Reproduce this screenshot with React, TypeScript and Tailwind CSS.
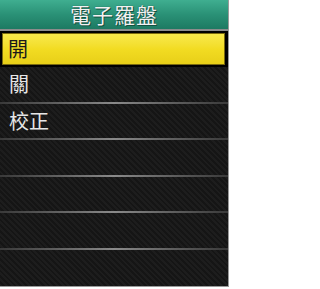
import React from 'react';

const items = ['開', '關', '校正', '', '', '', ''];

const App: React.FC = () => {
  return (
    <div className="w-[231px] h-[289px] bg-white" style={{ fontFamily: '"Noto Sans CJK TC", "Noto Sans", sans-serif' }}>
      <div className="w-[229px] h-[287px] border-r border-b border-[#9a9a9a] flex flex-col bg-[#1a1a1a] bg-[repeating-linear-gradient(45deg,#1d1d1d_0px,#1d1d1d_2px,#151515_2px,#151515_4px)] overflow-hidden">
        {/* header */}
        <div className="h-[31px] shrink-0 border-b-2 border-[#8c8c8c] bg-gradient-to-b from-[#3fae90] via-[#2a9176] to-[#1d7a62] flex items-center justify-center">
          <span className="text-[21px] leading-none text-[#f2f2f2] tracking-[1px] [text-shadow:0_0_1px_#0d3d30,1px_1px_0_#145443]">
            電子羅盤
          </span>
        </div>

        {/* menu rows */}
        <div className="flex-1 flex flex-col">
          {items.map((label, i) =>
            i === 0 ? (
              <div key={i} className="h-[36px] shrink-0 bg-black p-[2px] pr-[3px]">
                <div className="h-full bg-gradient-to-b from-[#f8e94a] via-[#f2dc22] to-[#e8cf18] border border-[#7a6a10] flex items-center pl-[5px]">
                  <span className="text-[20px] leading-none text-[#1a1a1a]">{label}</span>
                </div>
              </div>
            ) : (
              <div key={i} className="h-[36.6px] shrink-0 flex flex-col">
                <div className="flex-1 flex items-center pl-[9px]">
                  <span className="text-[20px] leading-none text-[#e6e6e6]">{label}</span>
                </div>
                {i < items.length - 1 && (
                  <div className="h-[2px] shrink-0 bg-gradient-to-r from-[#3a3a3a] via-[#8a8a8a] to-[#3a3a3a]" />
                )}
              </div>
            )
          )}
        </div>
      </div>
    </div>
  );
};

export default App;
